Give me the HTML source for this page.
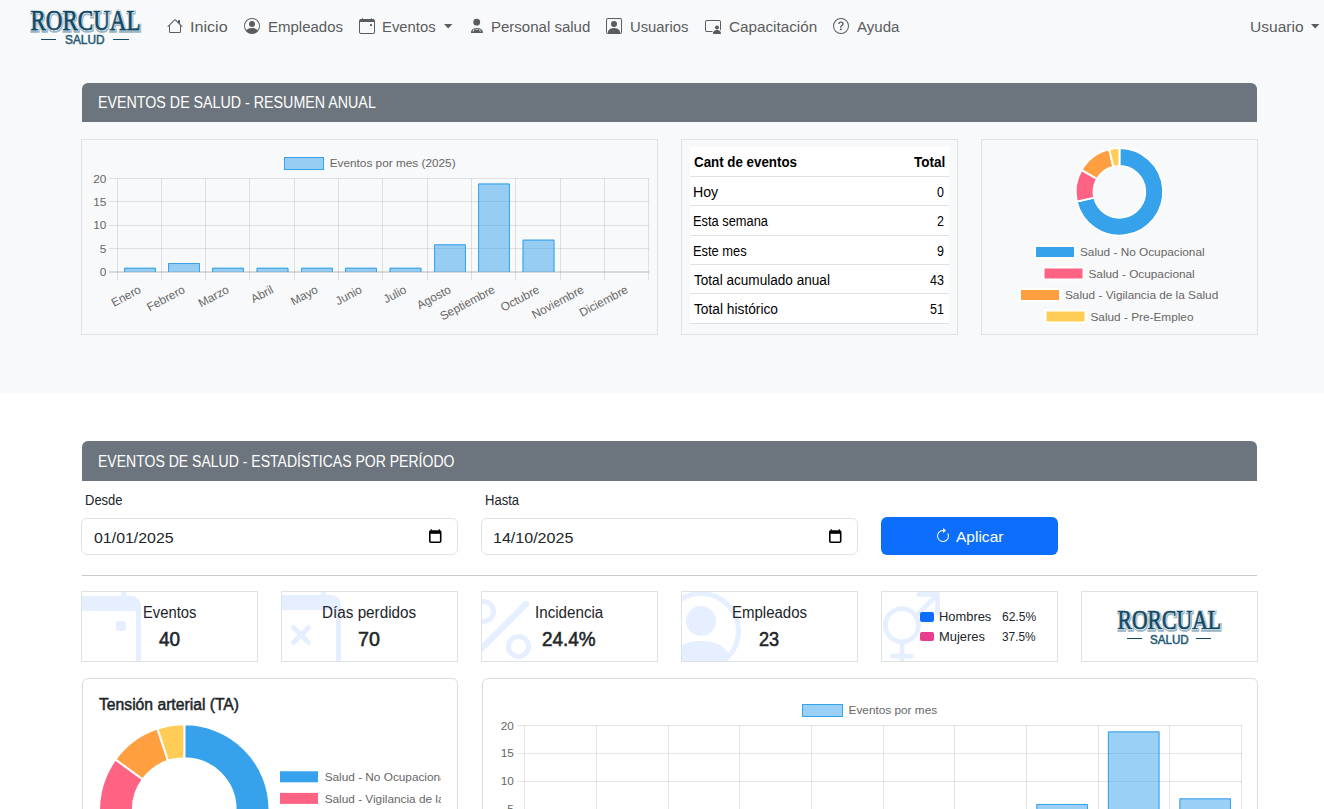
<!DOCTYPE html><html><head><meta charset="utf-8"><style>
html,body{margin:0;padding:0}
body{width:1324px;height:809px;overflow:hidden;position:relative;background:#fff;font-family:"Liberation Sans", sans-serif}
.t{position:absolute;line-height:1;white-space:nowrap}
.b{position:absolute;box-sizing:border-box}
svg.b{overflow:visible}
</style></head><body>
<div class="b" style="left:0px;top:0px;width:1324px;height:393px;background:#f8f9fa"></div>
<div class="t" style="left:30px;top:9px;width:111px;height:21px;"><svg width="111" height="21" viewBox="0 0 111 21" style="position:absolute;left:0;top:0;overflow:visible"><text x="55.5" y="21" text-anchor="middle" textLength="110" lengthAdjust="spacingAndGlyphs" font-family="Liberation Serif" font-weight="400" font-size="29.0" stroke-linejoin="miter" transform="translate(0.5 0.6)" fill="#9ab5c3" stroke="#9ab5c3" stroke-width="3.6">RORCUAL</text><text x="55.5" y="21" text-anchor="middle" textLength="110" lengthAdjust="spacingAndGlyphs" font-family="Liberation Serif" font-weight="400" font-size="29.0" stroke-linejoin="miter" fill="#fff" stroke="#fff" stroke-width="2.0">RORCUAL</text><text x="55.5" y="21" text-anchor="middle" textLength="110" lengthAdjust="spacingAndGlyphs" font-family="Liberation Serif" font-weight="400" font-size="29.0" stroke-linejoin="miter" fill="#114a66" stroke="#114a66" stroke-width="0.75">RORCUAL</text></svg></div>
<div class="t" style="left:65px;top:34.5px;width:39.5px;height:9px;"><svg width="39.5" height="9" viewBox="0 0 39.5 9" style="position:absolute;left:0;top:0;overflow:visible"><text x="19.75" y="9" text-anchor="middle" textLength="39.5" lengthAdjust="spacingAndGlyphs" font-family="Liberation Sans" font-weight="400" font-size="12.6" fill="#245a74" stroke="#245a74" stroke-width="0.5">SALUD</text></svg></div>
<div class="b" style="left:40.6px;top:38.6px;width:15.399999999999999px;height:1.5px;background:#114a66"></div>
<div class="b" style="left:113.3px;top:38.6px;width:15.700000000000003px;height:1.5px;background:#114a66"></div>
<div class="t" style="left:189.95px;top:18.96px;font-size:15.4px;color:#5b5c5e;font-weight:400;transform:scaleX(1.0474);transform-origin:0 0;-webkit-text-stroke:0px #5b5c5e">Inicio</div>
<div class="t" style="left:267.53px;top:18.96px;font-size:15.4px;color:#5b5c5e;font-weight:400;transform:scaleX(0.9738);transform-origin:0 0;-webkit-text-stroke:0px #5b5c5e">Empleados</div>
<div class="t" style="left:382.03px;top:18.96px;font-size:15.4px;color:#5b5c5e;font-weight:400;transform:scaleX(0.9651);transform-origin:0 0;-webkit-text-stroke:0px #5b5c5e">Eventos</div>
<div class="t" style="left:490.62px;top:18.96px;font-size:15.4px;color:#5b5c5e;font-weight:400;transform:scaleX(0.9755);transform-origin:0 0;-webkit-text-stroke:0px #5b5c5e">Personal salud</div>
<div class="t" style="left:629.74px;top:18.96px;font-size:15.4px;color:#5b5c5e;font-weight:400;transform:scaleX(0.9628);transform-origin:0 0;-webkit-text-stroke:0px #5b5c5e">Usuarios</div>
<div class="t" style="left:728.70px;top:18.96px;font-size:15.4px;color:#5b5c5e;font-weight:400;transform:scaleX(0.9908);transform-origin:0 0;-webkit-text-stroke:0px #5b5c5e">Capacitación</div>
<div class="t" style="left:856.70px;top:18.96px;font-size:15.4px;color:#5b5c5e;font-weight:400;transform:scaleX(0.9771);transform-origin:0 0;-webkit-text-stroke:0px #5b5c5e">Ayuda</div>
<div class="t" style="left:1249.99px;top:18.96px;font-size:15.4px;color:#5b5c5e;font-weight:400;transform:scaleX(1.0102);transform-origin:0 0;-webkit-text-stroke:0px #5b5c5e">Usuario</div>
<svg class="b" style="left:167px;top:18px;" width="16" height="16" viewBox="0 0 16 16" fill="#5b5c5e" fill-rule="evenodd"><path d="M8.707 1.5a1 1 0 0 0-1.414 0L.646 8.146a.5.5 0 0 0 .708.708L2 8.207V13.5A1.5 1.5 0 0 0 3.5 15h9a1.5 1.5 0 0 0 1.5-1.5V8.207l.646.647a.5.5 0 0 0 .708-.708L13 5.793V2.5a.5.5 0 0 0-.5-.5h-1a.5.5 0 0 0-.5.5v1.293zM13 7.207V13.5a.5.5 0 0 1-.5.5h-9a.5.5 0 0 1-.5-.5V7.207l5-5z"/></svg>
<svg class="b" style="left:243.5px;top:18px;" width="16" height="16" viewBox="0 0 16 16" fill="#5b5c5e" fill-rule="evenodd"><path d="M11 6a3 3 0 1 1-6 0 3 3 0 0 1 6 0"/><path d="M0 8a8 8 0 1 1 16 0A8 8 0 0 1 0 8m8-7a7 7 0 0 0-5.468 11.37C3.242 11.226 4.805 10 8 10s4.757 1.225 5.468 2.37A7 7 0 0 0 8 1"/></svg>
<svg class="b" style="left:358.5px;top:18px;" width="16" height="16" viewBox="0 0 16 16" fill="#5b5c5e" fill-rule="evenodd"><path d="M11 6.5a.5.5 0 0 1 .5-.5h1a.5.5 0 0 1 .5.5v1a.5.5 0 0 1-.5.5h-1a.5.5 0 0 1-.5-.5z"/><path d="M3.5 0a.5.5 0 0 1 .5.5V1h8V.5a.5.5 0 0 1 1 0V1h1a2 2 0 0 1 2 2v11a2 2 0 0 1-2 2H2a2 2 0 0 1-2-2V3a2 2 0 0 1 2-2h1V.5a.5.5 0 0 1 .5-.5M1 4v10a1 1 0 0 0 1 1h12a1 1 0 0 0 1-1V4z"/></svg>
<svg class="b" style="left:605.7px;top:18px;" width="16" height="16" viewBox="0 0 16 16" fill="#5b5c5e" fill-rule="evenodd"><path d="M11 6a3 3 0 1 1-6 0 3 3 0 0 1 6 0"/><path d="M2 0a2 2 0 0 0-2 2v12a2 2 0 0 0 2 2h12a2 2 0 0 0 2-2V2a2 2 0 0 0-2-2zm12 1a1 1 0 0 1 1 1v12a1 1 0 0 1-1 1v-1c0-1-1-4-6-4s-6 3-6 4v1a1 1 0 0 1-1-1V2a1 1 0 0 1 1-1z"/></svg>
<svg class="b" style="left:705px;top:18px;" width="16" height="16" viewBox="0 0 16 16" fill="#5b5c5e" fill-rule="evenodd"><path d="M14 9.5a2 2 0 1 1-4 0 2 2 0 0 1 4 0m-6 5.7c0 .8.8.8.8.8h6.4s.8 0 .8-.8-.8-3.2-4-3.2-4 2.4-4 3.2"/><path d="M2 2a2 2 0 0 0-2 2v8a2 2 0 0 0 2 2h5.243c.122-.326.295-.668.526-1H2a1 1 0 0 1-1-1V4a1 1 0 0 1 1-1h12a1 1 0 0 1 1 1v7.81c.353.23.656.496.91.783Q16 12.312 16 12V4a2 2 0 0 0-2-2z"/></svg>
<svg class="b" style="left:833px;top:18px;" width="16" height="16" viewBox="0 0 16 16" fill="#5b5c5e" fill-rule="evenodd"><path d="M8 15A7 7 0 1 1 8 1a7 7 0 0 1 0 14m0 1A8 8 0 1 0 8 0a8 8 0 0 0 0 16"/><path d="M5.255 5.786a.237.237 0 0 0 .241.247h.825c.138 0 .248-.113.266-.25.09-.656.54-1.134 1.342-1.134.686 0 1.314.343 1.314 1.168 0 .635-.374.927-.965 1.371-.673.489-1.206 1.06-1.168 1.987l.003.217a.25.25 0 0 0 .25.246h.811a.25.25 0 0 0 .25-.25v-.105c0-.718.273-.927 1.01-1.486.609-.463 1.244-.977 1.244-2.056 0-1.511-1.276-2.241-2.673-2.241-1.267 0-2.655.59-2.75 2.286m1.557 5.763c0 .533.425.927 1.01.927.609 0 1.028-.394 1.028-.927 0-.552-.42-.94-1.029-.94-.584 0-1.009.388-1.009.94"/></svg>
<svg class="b" style="left:470px;top:18px" width="14" height="16" viewBox="0 0 14 16"><circle cx="6.7" cy="4.2" r="3.4" fill="#5b5c5e"/><path d="M1 15 C1 11.5 3 10 6.8 10 C10.6 10 12.9 11.5 12.9 15 Z" fill="#5b5c5e"/><path d="M4 11.2 L3.2 13.6 M9.6 11.2 L10.4 13.6 M5.5 10.6 L6.8 12 L8.1 10.6" stroke="#f8f9fa" stroke-width="0.9" fill="none"/></svg>
<svg class="b" style="left:444.2px;top:23.6px" width="8.4" height="4.6" viewBox="0 0 8.4 4.6"><path d="M0 0 L8.4 0 L4.2 4.6 Z" fill="#5b5c5e"/></svg>
<svg class="b" style="left:1311px;top:23.6px" width="8.4" height="4.6" viewBox="0 0 8.4 4.6"><path d="M0 0 L8.4 0 L4.2 4.6 Z" fill="#5b5c5e"/></svg>
<div class="b" style="left:82px;top:82.8px;width:1175px;height:39px;background:#6c757d;border-radius:6px 6px 0 0"></div>
<div class="t" style="left:97.80px;top:94.83px;font-size:15.8px;color:#fff;font-weight:400;transform:scaleX(0.9025);transform-origin:0 0;-webkit-text-stroke:0px #fff">EVENTOS DE SALUD - RESUMEN ANUAL</div>
<div class="b" style="left:81px;top:139px;width:577px;height:196px;border:1px solid #dfe1e3;background:#f8f9fa"></div>
<div class="b" style="left:681px;top:139px;width:277px;height:196px;border:1px solid #dfe1e3;background:#f8f9fa"></div>
<div class="b" style="left:981px;top:139px;width:277px;height:196px;border:1px solid #dfe1e3;background:#f8f9fa"></div>
<div class="b" style="left:690px;top:147px;width:259px;height:176.5px;background:#fff"></div>
<div class="b" style="left:690px;top:175.8px;width:259px;height:1px;background:#dee2e6"></div>
<div class="b" style="left:690px;top:205.1px;width:259px;height:1px;background:#dee2e6"></div>
<div class="b" style="left:690px;top:234.5px;width:259px;height:1px;background:#dee2e6"></div>
<div class="b" style="left:690px;top:263.9px;width:259px;height:1px;background:#dee2e6"></div>
<div class="b" style="left:690px;top:293.2px;width:259px;height:1px;background:#dee2e6"></div>
<div class="b" style="left:690px;top:322.5px;width:259px;height:1px;background:#dee2e6"></div>
<div class="t" style="left:694.30px;top:155.15px;font-size:14px;color:#000;font-weight:700;transform:scaleX(0.9525);transform-origin:0 0;-webkit-text-stroke:0px #000">Cant de eventos</div>
<div class="t" style="left:914.00px;top:155.15px;font-size:14px;color:#000;font-weight:700;transform:scaleX(0.9647);transform-origin:0 0;-webkit-text-stroke:0px #000">Total</div>
<div class="t" style="left:693.29px;top:184.95px;font-size:14px;color:#000;font-weight:400;transform:scaleX(1.0127);transform-origin:0 0;-webkit-text-stroke:0px #000">Hoy</div>
<div class="t" style="left:937.30px;top:184.95px;font-size:14px;color:#000;font-weight:400;transform:scaleX(0.8875);transform-origin:0 0;-webkit-text-stroke:0px #000">0</div>
<div class="t" style="left:693.38px;top:214.30px;font-size:14px;color:#000;font-weight:400;transform:scaleX(0.9181);transform-origin:0 0;-webkit-text-stroke:0px #000">Esta semana</div>
<div class="t" style="left:937.30px;top:214.30px;font-size:14px;color:#000;font-weight:400;transform:scaleX(0.8875);transform-origin:0 0;-webkit-text-stroke:0px #000">2</div>
<div class="t" style="left:693.38px;top:243.65px;font-size:14px;color:#000;font-weight:400;transform:scaleX(0.9206);transform-origin:0 0;-webkit-text-stroke:0px #000">Este mes</div>
<div class="t" style="left:937.30px;top:243.65px;font-size:14px;color:#000;font-weight:400;transform:scaleX(0.8875);transform-origin:0 0;-webkit-text-stroke:0px #000">9</div>
<div class="t" style="left:694.30px;top:273.00px;font-size:14px;color:#000;font-weight:400;transform:scaleX(0.9701);transform-origin:0 0;-webkit-text-stroke:0px #000">Total acumulado anual</div>
<div class="t" style="left:930.30px;top:273.00px;font-size:14px;color:#000;font-weight:400;transform:scaleX(0.8932);transform-origin:0 0;-webkit-text-stroke:0px #000">43</div>
<div class="t" style="left:694.30px;top:302.35px;font-size:14px;color:#000;font-weight:400;transform:scaleX(0.9813);transform-origin:0 0;-webkit-text-stroke:0px #000">Total histórico</div>
<div class="t" style="left:930.30px;top:302.35px;font-size:14px;color:#000;font-weight:400;transform:scaleX(0.8932);transform-origin:0 0;-webkit-text-stroke:0px #000">51</div>
<div class="b" style="left:82px;top:441.4px;width:1175px;height:39.3px;background:#6c757d;border-radius:6px 6px 0 0"></div>
<div class="t" style="left:97.81px;top:454.03px;font-size:15.8px;color:#fff;font-weight:400;transform:scaleX(0.8879);transform-origin:0 0;-webkit-text-stroke:0px #fff">EVENTOS DE SALUD - ESTADÍSTICAS POR PERÍODO</div>
<div class="t" style="left:85.37px;top:493.15px;font-size:14px;color:#212529;font-weight:400;transform:scaleX(0.9274);transform-origin:0 0;-webkit-text-stroke:0px #212529">Desde</div>
<div class="t" style="left:485.07px;top:492.95px;font-size:14px;color:#212529;font-weight:400;transform:scaleX(0.9305);transform-origin:0 0;-webkit-text-stroke:0px #212529">Hasta</div>
<div class="b" style="left:81px;top:518px;width:377px;height:37px;border:1px solid #dee2e6;border-radius:6px;background:#fff"></div>
<div class="t" style="left:94.30px;top:529.56px;font-size:15.4px;color:#212529;font-weight:400;transform:scaleX(1.0344);transform-origin:0 0;-webkit-text-stroke:0px #212529">01/01/2025</div>
<svg class="b" style="left:428.5px;top:529px" width="12.5" height="14" viewBox="0 0 12.5 14"><path d="M2.2 0.3 V1.8 M10.3 0.3 V1.8" stroke="#000" stroke-width="1.2"/><rect x="0.8" y="2" width="10.9" height="11.2" rx="1" fill="none" stroke="#000" stroke-width="1.6"/><rect x="0.8" y="2" width="10.9" height="2.8" fill="#000"/></svg>
<div class="b" style="left:481px;top:518px;width:377px;height:37px;border:1px solid #dee2e6;border-radius:6px;background:#fff"></div>
<div class="t" style="left:493.26px;top:529.56px;font-size:15.4px;color:#212529;font-weight:400;transform:scaleX(1.0428);transform-origin:0 0;-webkit-text-stroke:0px #212529">14/10/2025</div>
<svg class="b" style="left:828.5px;top:529px" width="12.5" height="14" viewBox="0 0 12.5 14"><path d="M2.2 0.3 V1.8 M10.3 0.3 V1.8" stroke="#000" stroke-width="1.2"/><rect x="0.8" y="2" width="10.9" height="11.2" rx="1" fill="none" stroke="#000" stroke-width="1.6"/><rect x="0.8" y="2" width="10.9" height="2.8" fill="#000"/></svg>
<div class="b" style="left:881px;top:517px;width:177px;height:38px;background:#0d6efd;border-radius:6px"></div>
<svg class="b" style="left:935.3px;top:527.6px;" width="16" height="16" viewBox="0 0 16 16" fill="#fff" fill-rule="evenodd"><path d="M8 3a5 5 0 1 0 4.546 2.914.5.5 0 0 1 .908-.417A6 6 0 1 1 8 2z"/><path d="M8 4.466V.534a.25.25 0 0 1 .41-.192l2.36 1.966c.12.1.12.284 0 .384L8.41 4.658A.25.25 0 0 1 8 4.466"/></svg>
<div class="t" style="left:956.40px;top:528.96px;font-size:15.4px;color:#fff;font-weight:400;transform:scaleX(1.0081);transform-origin:0 0;-webkit-text-stroke:0px #fff">Aplicar</div>
<div class="b" style="left:82px;top:574.5px;width:1175px;height:1px;background:#c9cbcd"></div>
<div class="b" style="left:81px;top:591px;width:177px;height:71px;border:1px solid #dee2e6;background:#fff;overflow:hidden">
<svg style="position:absolute;left:-21px;top:-1px" width="80" height="80" viewBox="0 0 16 16" fill="#e5efff" fill-rule="evenodd"><path d="M11 6.5a.5.5 0 0 1 .5-.5h1a.5.5 0 0 1 .5.5v1a.5.5 0 0 1-.5.5h-1a.5.5 0 0 1-.5-.5z"/><path d="M3.5 0a.5.5 0 0 1 .5.5V1h8V.5a.5.5 0 0 1 1 0V1h1a2 2 0 0 1 2 2v11a2 2 0 0 1-2 2H2a2 2 0 0 1-2-2V3a2 2 0 0 1 2-2h1V.5a.5.5 0 0 1 .5-.5M1 4v10a1 1 0 0 0 1 1h12a1 1 0 0 0 1-1V4z"/></svg>
</div>
<div class="t" style="left:142.65px;top:604.79px;font-size:15.6px;color:#212529;font-weight:400;transform:scaleX(0.9469);transform-origin:0 0;-webkit-text-stroke:0px #212529">Eventos</div>
<div class="t" style="left:159.28px;top:629.07px;font-size:20px;color:#212529;font-weight:400;transform:scaleX(0.9470);transform-origin:0 0;-webkit-text-stroke:0.55px #212529">40</div>
<div class="b" style="left:281px;top:591px;width:177px;height:71px;border:1px solid #dee2e6;background:#fff;overflow:hidden">
<svg style="position:absolute;left:-21px;top:-2px" width="80" height="80" viewBox="0 0 16 16" fill="#e5efff" fill-rule="evenodd"><path d="M6.146 7.146a.5.5 0 0 1 .708 0L8 8.293l1.146-1.147a.5.5 0 1 1 .708.708L8.707 9l1.147 1.146a.5.5 0 0 1-.708.708L8 9.707l-1.146 1.147a.5.5 0 0 1-.708-.708L7.293 9 6.146 7.854a.5.5 0 0 1 0-.708"/><path d="M3.5 0a.5.5 0 0 1 .5.5V1h8V.5a.5.5 0 0 1 1 0V1h1a2 2 0 0 1 2 2v11a2 2 0 0 1-2 2H2a2 2 0 0 1-2-2V3a2 2 0 0 1 2-2h1V.5a.5.5 0 0 1 .5-.5M1 4v10a1 1 0 0 0 1 1h12a1 1 0 0 0 1-1V4z"/></svg>
</div>
<div class="t" style="left:322.42px;top:604.79px;font-size:15.6px;color:#212529;font-weight:400;transform:scaleX(0.9789);transform-origin:0 0;-webkit-text-stroke:0px #212529">Días perdidos</div>
<div class="t" style="left:358.29px;top:629.07px;font-size:20px;color:#212529;font-weight:400;transform:scaleX(0.9823);transform-origin:0 0;-webkit-text-stroke:0.55px #212529">70</div>
<div class="b" style="left:481px;top:591px;width:177px;height:71px;border:1px solid #dee2e6;background:#fff;overflow:hidden">
<svg style="position:absolute;left:-21px;top:-3px" width="80" height="80" viewBox="0 0 16 16" fill="#e5efff" fill-rule="evenodd"><path d="M13.442 2.558a.625.625 0 0 1 0 .884l-10 10a.625.625 0 1 1-.884-.884l10-10a.625.625 0 0 1 .884 0M4.5 6a1.5 1.5 0 1 1 0-3 1.5 1.5 0 0 1 0 3m0 1a2.5 2.5 0 1 0 0-5 2.5 2.5 0 0 0 0 5m7 6a1.5 1.5 0 1 1 0-3 1.5 1.5 0 0 1 0 3m0 1a2.5 2.5 0 1 0 0-5 2.5 2.5 0 0 0 0 5"/></svg>
</div>
<div class="t" style="left:534.83px;top:604.79px;font-size:15.6px;color:#212529;font-weight:400;transform:scaleX(0.9720);transform-origin:0 0;-webkit-text-stroke:0px #212529">Incidencia</div>
<div class="t" style="left:542.23px;top:629.07px;font-size:20px;color:#212529;font-weight:400;transform:scaleX(0.9450);transform-origin:0 0;-webkit-text-stroke:0.55px #212529">24.4%</div>
<div class="b" style="left:681px;top:591px;width:177px;height:71px;border:1px solid #dee2e6;background:#fff;overflow:hidden">
<svg style="position:absolute;left:-21px;top:-1px" width="80" height="80" viewBox="0 0 16 16" fill="#e5efff" fill-rule="evenodd"><path d="M11 6a3 3 0 1 1-6 0 3 3 0 0 1 6 0"/><path d="M0 8a8 8 0 1 1 16 0A8 8 0 0 1 0 8m8-7a7 7 0 0 0-5.468 11.37C3.242 11.226 4.805 10 8 10s4.757 1.225 5.468 2.37A7 7 0 0 0 8 1"/></svg>
</div>
<div class="t" style="left:732.04px;top:604.79px;font-size:15.6px;color:#212529;font-weight:400;transform:scaleX(0.9622);transform-origin:0 0;-webkit-text-stroke:0px #212529">Empleados</div>
<div class="t" style="left:759.07px;top:629.07px;font-size:20px;color:#212529;font-weight:400;transform:scaleX(0.9066);transform-origin:0 0;-webkit-text-stroke:0.55px #212529">23</div>
<div class="b" style="left:881px;top:591px;width:177px;height:71px;border:1px solid #dee2e6;background:#fff;overflow:hidden">
<svg style="position:absolute;left:-18.5px;top:0px" width="76" height="76" viewBox="0 0 16 16" fill="#e5efff" fill-rule="evenodd"><path d="M11.5 1a.5.5 0 0 1 0-1h4a.5.5 0 0 1 .5.5v4a.5.5 0 0 1-1 0V1.707l-3.45 3.45A4 4 0 0 1 8.5 10.97V13H10a.5.5 0 0 1 0 1H8.5v1.5a.5.5 0 0 1-1 0V14H6a.5.5 0 0 1 0-1h1.5v-2.03a4 4 0 1 1 3.471-6.648L14.293 1zm-.997 4.346a3 3 0 1 0-5.006 3.309 3 3 0 0 0 5.006-3.31z"/></svg>
</div>
<div class="b" style="left:919.8px;top:612.3px;width:14px;height:9.3px;background:#0d6efd;border-radius:2px"></div>
<div class="b" style="left:919.8px;top:631.6px;width:14px;height:9.6px;background:#e83e8c;border-radius:2px"></div>
<div class="t" style="left:939.29px;top:611.16px;font-size:12.8px;color:#212529;font-weight:400;transform:scaleX(1.0076);transform-origin:0 0;-webkit-text-stroke:0px #212529">Hombres</div>
<div class="t" style="left:939.29px;top:630.96px;font-size:12.8px;color:#212529;font-weight:400;transform:scaleX(1.0087);transform-origin:0 0;-webkit-text-stroke:0px #212529">Mujeres</div>
<div class="t" style="left:1002.00px;top:611.16px;font-size:12.8px;color:#212529;font-weight:400;transform:scaleX(0.9386);transform-origin:0 0;-webkit-text-stroke:0px #212529">62.5%</div>
<div class="t" style="left:1002.40px;top:630.96px;font-size:12.8px;color:#212529;font-weight:400;transform:scaleX(0.9274);transform-origin:0 0;-webkit-text-stroke:0px #212529">37.5%</div>
<div class="b" style="left:1081px;top:591px;width:177px;height:71px;border:1px solid #dee2e6;background:#fff;overflow:hidden">
</div>
<div class="t" style="left:1117px;top:610.1px;width:104.6px;height:19.4px;"><svg width="104.6" height="19.4" viewBox="0 0 104.6 19.4" style="position:absolute;left:0;top:0;overflow:visible"><text x="52.3" y="19.4" text-anchor="middle" textLength="103.6" lengthAdjust="spacingAndGlyphs" font-family="Liberation Serif" font-weight="400" font-size="26.8" stroke-linejoin="miter" transform="translate(0.5 0.6)" fill="#9ab5c3" stroke="#9ab5c3" stroke-width="3.6">RORCUAL</text><text x="52.3" y="19.4" text-anchor="middle" textLength="103.6" lengthAdjust="spacingAndGlyphs" font-family="Liberation Serif" font-weight="400" font-size="26.8" stroke-linejoin="miter" fill="#fff" stroke="#fff" stroke-width="2.0">RORCUAL</text><text x="52.3" y="19.4" text-anchor="middle" textLength="103.6" lengthAdjust="spacingAndGlyphs" font-family="Liberation Serif" font-weight="400" font-size="26.8" stroke-linejoin="miter" fill="#114a66" stroke="#114a66" stroke-width="0.75">RORCUAL</text></svg></div>
<div class="t" style="left:1149.6px;top:634.5px;width:38.7px;height:8.6px;"><svg width="38.7" height="8.6" viewBox="0 0 38.7 8.6" style="position:absolute;left:0;top:0;overflow:visible"><text x="19.35" y="8.6" text-anchor="middle" textLength="38.7" lengthAdjust="spacingAndGlyphs" font-family="Liberation Sans" font-weight="400" font-size="12.0" fill="#245a74" stroke="#245a74" stroke-width="0.5">SALUD</text></svg></div>
<div class="b" style="left:1127px;top:637.7px;width:15px;height:1.5px;background:#114a66"></div>
<div class="b" style="left:1196px;top:637.7px;width:15px;height:1.5px;background:#114a66"></div>
<div class="b" style="left:81.5px;top:678px;width:376px;height:200px;border:1px solid #dcdcdc;border-radius:6px;background:#fff"></div>
<div class="b" style="left:481.5px;top:678px;width:776px;height:200px;border:1px solid #dcdcdc;border-radius:6px;background:#fff"></div>
<div class="t" style="left:98.95px;top:697.03px;font-size:15.8px;color:#212529;font-weight:400;transform:scaleX(0.9930);transform-origin:0 0;-webkit-text-stroke:0.5px #212529">Tensión arterial (TA)</div>
<svg class="b" style="left:0;top:0" width="1324" height="809" viewBox="0 0 1324 809" font-family="Liberation Sans"><line x1="117.5" y1="178.43" x2="117.5" y2="280.0" stroke="rgba(0,0,0,0.1)" stroke-width="1"/><line x1="161.5" y1="178.43" x2="161.5" y2="280.0" stroke="rgba(0,0,0,0.1)" stroke-width="1"/><line x1="205.5" y1="178.43" x2="205.5" y2="280.0" stroke="rgba(0,0,0,0.1)" stroke-width="1"/><line x1="249.5" y1="178.43" x2="249.5" y2="280.0" stroke="rgba(0,0,0,0.1)" stroke-width="1"/><line x1="294.5" y1="178.43" x2="294.5" y2="280.0" stroke="rgba(0,0,0,0.1)" stroke-width="1"/><line x1="338.5" y1="178.43" x2="338.5" y2="280.0" stroke="rgba(0,0,0,0.1)" stroke-width="1"/><line x1="382.5" y1="178.43" x2="382.5" y2="280.0" stroke="rgba(0,0,0,0.1)" stroke-width="1"/><line x1="427.5" y1="178.43" x2="427.5" y2="280.0" stroke="rgba(0,0,0,0.1)" stroke-width="1"/><line x1="471.5" y1="178.43" x2="471.5" y2="280.0" stroke="rgba(0,0,0,0.1)" stroke-width="1"/><line x1="515.5" y1="178.43" x2="515.5" y2="280.0" stroke="rgba(0,0,0,0.1)" stroke-width="1"/><line x1="560.5" y1="178.43" x2="560.5" y2="280.0" stroke="rgba(0,0,0,0.1)" stroke-width="1"/><line x1="604.5" y1="178.43" x2="604.5" y2="280.0" stroke="rgba(0,0,0,0.1)" stroke-width="1"/><line x1="648.5" y1="178.43" x2="648.5" y2="280.0" stroke="rgba(0,0,0,0.1)" stroke-width="1"/><line x1="109" y1="272" x2="649" y2="272" stroke="rgba(0,0,0,0.25)" stroke-width="1"/><text x="106.3" y="276.10" text-anchor="end" font-size="11.8" fill="#666">0</text><line x1="109" y1="248.5" x2="649" y2="248.5" stroke="rgba(0,0,0,0.1)" stroke-width="1"/><text x="106.3" y="252.71" text-anchor="end" font-size="11.8" fill="#666">5</text><line x1="109" y1="225.5" x2="649" y2="225.5" stroke="rgba(0,0,0,0.1)" stroke-width="1"/><text x="106.3" y="229.31" text-anchor="end" font-size="11.8" fill="#666">10</text><line x1="109" y1="201.5" x2="649" y2="201.5" stroke="rgba(0,0,0,0.1)" stroke-width="1"/><text x="106.3" y="205.92" text-anchor="end" font-size="11.8" fill="#666">15</text><line x1="109" y1="178.5" x2="649" y2="178.5" stroke="rgba(0,0,0,0.1)" stroke-width="1"/><text x="106.3" y="182.53" text-anchor="end" font-size="11.8" fill="#666">20</text><rect x="124.05" y="267.72" width="31.90" height="4.28" fill="rgba(54,162,235,0.5)"/><path d="M124.55 272.0 V268.22 H155.45 V272.0" fill="none" stroke="rgb(54,162,235)" stroke-width="1"/><rect x="168.05" y="263.04" width="31.90" height="8.96" fill="rgba(54,162,235,0.5)"/><path d="M168.55 272.0 V263.54 H199.45 V272.0" fill="none" stroke="rgb(54,162,235)" stroke-width="1"/><rect x="212.05" y="267.72" width="31.90" height="4.28" fill="rgba(54,162,235,0.5)"/><path d="M212.55 272.0 V268.22 H243.45 V272.0" fill="none" stroke="rgb(54,162,235)" stroke-width="1"/><rect x="256.55" y="267.72" width="31.90" height="4.28" fill="rgba(54,162,235,0.5)"/><path d="M257.05 272.0 V268.22 H287.95 V272.0" fill="none" stroke="rgb(54,162,235)" stroke-width="1"/><rect x="301.05" y="267.72" width="31.90" height="4.28" fill="rgba(54,162,235,0.5)"/><path d="M301.55 272.0 V268.22 H332.45 V272.0" fill="none" stroke="rgb(54,162,235)" stroke-width="1"/><rect x="345.05" y="267.72" width="31.90" height="4.28" fill="rgba(54,162,235,0.5)"/><path d="M345.55 272.0 V268.22 H376.45 V272.0" fill="none" stroke="rgb(54,162,235)" stroke-width="1"/><rect x="389.55" y="267.72" width="31.90" height="4.28" fill="rgba(54,162,235,0.5)"/><path d="M390.05 272.0 V268.22 H420.95 V272.0" fill="none" stroke="rgb(54,162,235)" stroke-width="1"/><rect x="434.05" y="244.33" width="31.90" height="27.67" fill="rgba(54,162,235,0.5)"/><path d="M434.55 272.0 V244.83 H465.45 V272.0" fill="none" stroke="rgb(54,162,235)" stroke-width="1"/><rect x="478.05" y="183.51" width="31.90" height="88.49" fill="rgba(54,162,235,0.5)"/><path d="M478.55 272.0 V184.01 H509.45 V272.0" fill="none" stroke="rgb(54,162,235)" stroke-width="1"/><rect x="522.55" y="239.65" width="31.90" height="32.35" fill="rgba(54,162,235,0.5)"/><path d="M523.05 272.0 V240.15 H553.95 V272.0" fill="none" stroke="rgb(54,162,235)" stroke-width="1"/><text x="140.50" y="292.50" text-anchor="end" font-size="11.8" fill="#666" transform="rotate(-28 140.50 289.5)">Enero</text><text x="184.50" y="292.50" text-anchor="end" font-size="11.8" fill="#666" transform="rotate(-28 184.50 289.5)">Febrero</text><text x="228.50" y="292.50" text-anchor="end" font-size="11.8" fill="#666" transform="rotate(-28 228.50 289.5)">Marzo</text><text x="273.00" y="292.50" text-anchor="end" font-size="11.8" fill="#666" transform="rotate(-28 273.00 289.5)">Abril</text><text x="317.50" y="292.50" text-anchor="end" font-size="11.8" fill="#666" transform="rotate(-28 317.50 289.5)">Mayo</text><text x="361.50" y="292.50" text-anchor="end" font-size="11.8" fill="#666" transform="rotate(-28 361.50 289.5)">Junio</text><text x="406.00" y="292.50" text-anchor="end" font-size="11.8" fill="#666" transform="rotate(-28 406.00 289.5)">Julio</text><text x="450.50" y="292.50" text-anchor="end" font-size="11.8" fill="#666" transform="rotate(-28 450.50 289.5)">Agosto</text><text x="494.50" y="292.50" text-anchor="end" font-size="11.8" fill="#666" transform="rotate(-28 494.50 289.5)">Septiembre</text><text x="539.00" y="292.50" text-anchor="end" font-size="11.8" fill="#666" transform="rotate(-28 539.00 289.5)">Octubre</text><text x="583.50" y="292.50" text-anchor="end" font-size="11.8" fill="#666" transform="rotate(-28 583.50 289.5)">Noviembre</text><text x="627.50" y="292.50" text-anchor="end" font-size="11.8" fill="#666" transform="rotate(-28 627.50 289.5)">Diciembre</text><rect x="284" y="157" width="40" height="13" fill="rgba(54,162,235,0.5)"/><rect x="284.5" y="157.5" width="39" height="12" fill="none" stroke="rgb(54,162,235)" stroke-width="1"/><text x="329.7" y="167.2" font-size="11.8" fill="#666">Eventos por mes (2025)</text><path d="M1119.40 148.00 A43.8 43.8 0 1 1 1076.72 201.65 L1094.26 197.60 A25.8 25.8 0 1 0 1119.40 166.00 Z" fill="#36a2eb" stroke="#fff" stroke-width="2"/><path d="M1076.72 201.65 A43.8 43.8 0 0 1 1081.47 169.90 L1097.06 178.90 A25.8 25.8 0 0 0 1094.26 197.60 Z" fill="#ff6384" stroke="#fff" stroke-width="2"/><path d="M1081.47 169.90 A43.8 43.8 0 0 1 1109.18 149.21 L1113.38 166.71 A25.8 25.8 0 0 0 1097.06 178.90 Z" fill="#ff9f40" stroke="#fff" stroke-width="2"/><path d="M1109.18 149.21 A43.8 43.8 0 0 1 1119.40 148.00 L1119.40 166.00 A25.8 25.8 0 0 0 1113.38 166.71 Z" fill="#ffcd56" stroke="#fff" stroke-width="2"/><rect x="1035" y="246" width="40" height="12" fill="#36a2eb" stroke="#fff" stroke-width="2"/><text x="1080" y="256.2" font-size="11.8" fill="#666">Salud - No Ocupacional</text><rect x="1043.5" y="267.5" width="40" height="12" fill="#ff6384" stroke="#fff" stroke-width="2"/><text x="1088.5" y="277.7" font-size="11.8" fill="#666">Salud - Ocupacional</text><rect x="1020" y="289" width="40" height="12" fill="#ff9f40" stroke="#fff" stroke-width="2"/><text x="1065" y="299.2" font-size="11.8" fill="#666">Salud - Vigilancia de la Salud</text><rect x="1045.5" y="310.5" width="40" height="12" fill="#ffcd56" stroke="#fff" stroke-width="2"/><text x="1090.5" y="320.7" font-size="11.8" fill="#666">Salud - Pre-Empleo</text><path d="M184.30 724.30 A85.2 85.2 0 0 1 184.30 894.70 L184.30 860.80 A51.3 51.3 0 0 0 184.30 758.20 Z" fill="#36a2eb" stroke="#fff" stroke-width="2"/><path d="M184.30 894.70 A85.2 85.2 0 0 1 100.96 827.21 L134.12 820.17 A51.3 51.3 0 0 0 184.30 860.80 Z" fill="#36a2eb" stroke="#fff" stroke-width="2"/><path d="M100.96 827.21 A85.2 85.2 0 0 1 115.37 759.42 L142.80 779.35 A51.3 51.3 0 0 0 134.12 820.17 Z" fill="#ff6384" stroke="#fff" stroke-width="2"/><path d="M115.37 759.42 A85.2 85.2 0 0 1 157.41 728.66 L168.11 760.82 A51.3 51.3 0 0 0 142.80 779.35 Z" fill="#ff9f40" stroke="#fff" stroke-width="2"/><path d="M157.41 728.66 A85.2 85.2 0 0 1 184.30 724.30 L184.30 758.20 A51.3 51.3 0 0 0 168.11 760.82 Z" fill="#ffcd56" stroke="#fff" stroke-width="2"/><defs><clipPath id="c1"><rect x="270" y="760" width="171" height="60"/></clipPath></defs><g clip-path="url(#c1)"><rect x="280" y="771.3" width="38" height="11" fill="#36a2eb"/><text x="324.7" y="781.0" font-size="11.8" fill="#666">Salud - No Ocupacional</text><rect x="280" y="792.9" width="38" height="11" fill="#ff6384"/><text x="324.7" y="802.6" font-size="11.8" fill="#666">Salud - Vigilancia de la Salud</text></g><line x1="524.5" y1="725.43" x2="524.5" y2="845.03" stroke="rgba(0,0,0,0.1)" stroke-width="1"/><line x1="596.5" y1="725.43" x2="596.5" y2="845.03" stroke="rgba(0,0,0,0.1)" stroke-width="1"/><line x1="668.5" y1="725.43" x2="668.5" y2="845.03" stroke="rgba(0,0,0,0.1)" stroke-width="1"/><line x1="739.5" y1="725.43" x2="739.5" y2="845.03" stroke="rgba(0,0,0,0.1)" stroke-width="1"/><line x1="811.5" y1="725.43" x2="811.5" y2="845.03" stroke="rgba(0,0,0,0.1)" stroke-width="1"/><line x1="883.5" y1="725.43" x2="883.5" y2="845.03" stroke="rgba(0,0,0,0.1)" stroke-width="1"/><line x1="954.5" y1="725.43" x2="954.5" y2="845.03" stroke="rgba(0,0,0,0.1)" stroke-width="1"/><line x1="1026.5" y1="725.43" x2="1026.5" y2="845.03" stroke="rgba(0,0,0,0.1)" stroke-width="1"/><line x1="1098.5" y1="725.43" x2="1098.5" y2="845.03" stroke="rgba(0,0,0,0.1)" stroke-width="1"/><line x1="1169.5" y1="725.43" x2="1169.5" y2="845.03" stroke="rgba(0,0,0,0.1)" stroke-width="1"/><line x1="1241.5" y1="725.43" x2="1241.5" y2="845.03" stroke="rgba(0,0,0,0.1)" stroke-width="1"/><line x1="517" y1="837.5" x2="1242" y2="837.5" stroke="rgba(0,0,0,0.1)" stroke-width="1"/><text x="513.9" y="841.13" text-anchor="end" font-size="11.8" fill="#666">0</text><line x1="517" y1="809.5" x2="1242" y2="809.5" stroke="rgba(0,0,0,0.1)" stroke-width="1"/><text x="513.9" y="813.23" text-anchor="end" font-size="11.8" fill="#666">5</text><line x1="517" y1="781.5" x2="1242" y2="781.5" stroke="rgba(0,0,0,0.1)" stroke-width="1"/><text x="513.9" y="785.33" text-anchor="end" font-size="11.8" fill="#666">10</text><line x1="517" y1="753.5" x2="1242" y2="753.5" stroke="rgba(0,0,0,0.1)" stroke-width="1"/><text x="513.9" y="757.43" text-anchor="end" font-size="11.8" fill="#666">15</text><line x1="517" y1="725.5" x2="1242" y2="725.5" stroke="rgba(0,0,0,0.1)" stroke-width="1"/><text x="513.9" y="729.53" text-anchor="end" font-size="11.8" fill="#666">20</text><rect x="534.40" y="831.85" width="51.60" height="5.18" fill="rgba(54,162,235,0.5)"/><path d="M534.90 837.03 V832.35 H585.50 V837.03" fill="none" stroke="rgb(54,162,235)" stroke-width="1"/><rect x="606.40" y="826.27" width="51.60" height="10.76" fill="rgba(54,162,235,0.5)"/><path d="M606.90 837.03 V826.77 H657.50 V837.03" fill="none" stroke="rgb(54,162,235)" stroke-width="1"/><rect x="677.90" y="831.85" width="51.60" height="5.18" fill="rgba(54,162,235,0.5)"/><path d="M678.40 837.03 V832.35 H729.00 V837.03" fill="none" stroke="rgb(54,162,235)" stroke-width="1"/><rect x="749.40" y="831.85" width="51.60" height="5.18" fill="rgba(54,162,235,0.5)"/><path d="M749.90 837.03 V832.35 H800.50 V837.03" fill="none" stroke="rgb(54,162,235)" stroke-width="1"/><rect x="821.40" y="831.85" width="51.60" height="5.18" fill="rgba(54,162,235,0.5)"/><path d="M821.90 837.03 V832.35 H872.50 V837.03" fill="none" stroke="rgb(54,162,235)" stroke-width="1"/><rect x="892.90" y="831.85" width="51.60" height="5.18" fill="rgba(54,162,235,0.5)"/><path d="M893.40 837.03 V832.35 H944.00 V837.03" fill="none" stroke="rgb(54,162,235)" stroke-width="1"/><rect x="964.40" y="831.85" width="51.60" height="5.18" fill="rgba(54,162,235,0.5)"/><path d="M964.90 837.03 V832.35 H1015.50 V837.03" fill="none" stroke="rgb(54,162,235)" stroke-width="1"/><rect x="1036.40" y="803.95" width="51.60" height="33.08" fill="rgba(54,162,235,0.5)"/><path d="M1036.90 837.03 V804.45 H1087.50 V837.03" fill="none" stroke="rgb(54,162,235)" stroke-width="1"/><rect x="1107.90" y="731.41" width="51.60" height="105.62" fill="rgba(54,162,235,0.5)"/><path d="M1108.40 837.03 V731.91 H1159.00 V837.03" fill="none" stroke="rgb(54,162,235)" stroke-width="1"/><rect x="1179.40" y="798.37" width="51.60" height="38.66" fill="rgba(54,162,235,0.5)"/><path d="M1179.90 837.03 V798.87 H1230.50 V837.03" fill="none" stroke="rgb(54,162,235)" stroke-width="1"/><rect x="802" y="704" width="41" height="13" fill="rgba(54,162,235,0.5)"/><rect x="802.5" y="704.5" width="40" height="12" fill="none" stroke="rgb(54,162,235)" stroke-width="1"/><text x="848.6" y="714.3" font-size="11.8" fill="#666">Eventos por mes</text></svg>
</body></html>
